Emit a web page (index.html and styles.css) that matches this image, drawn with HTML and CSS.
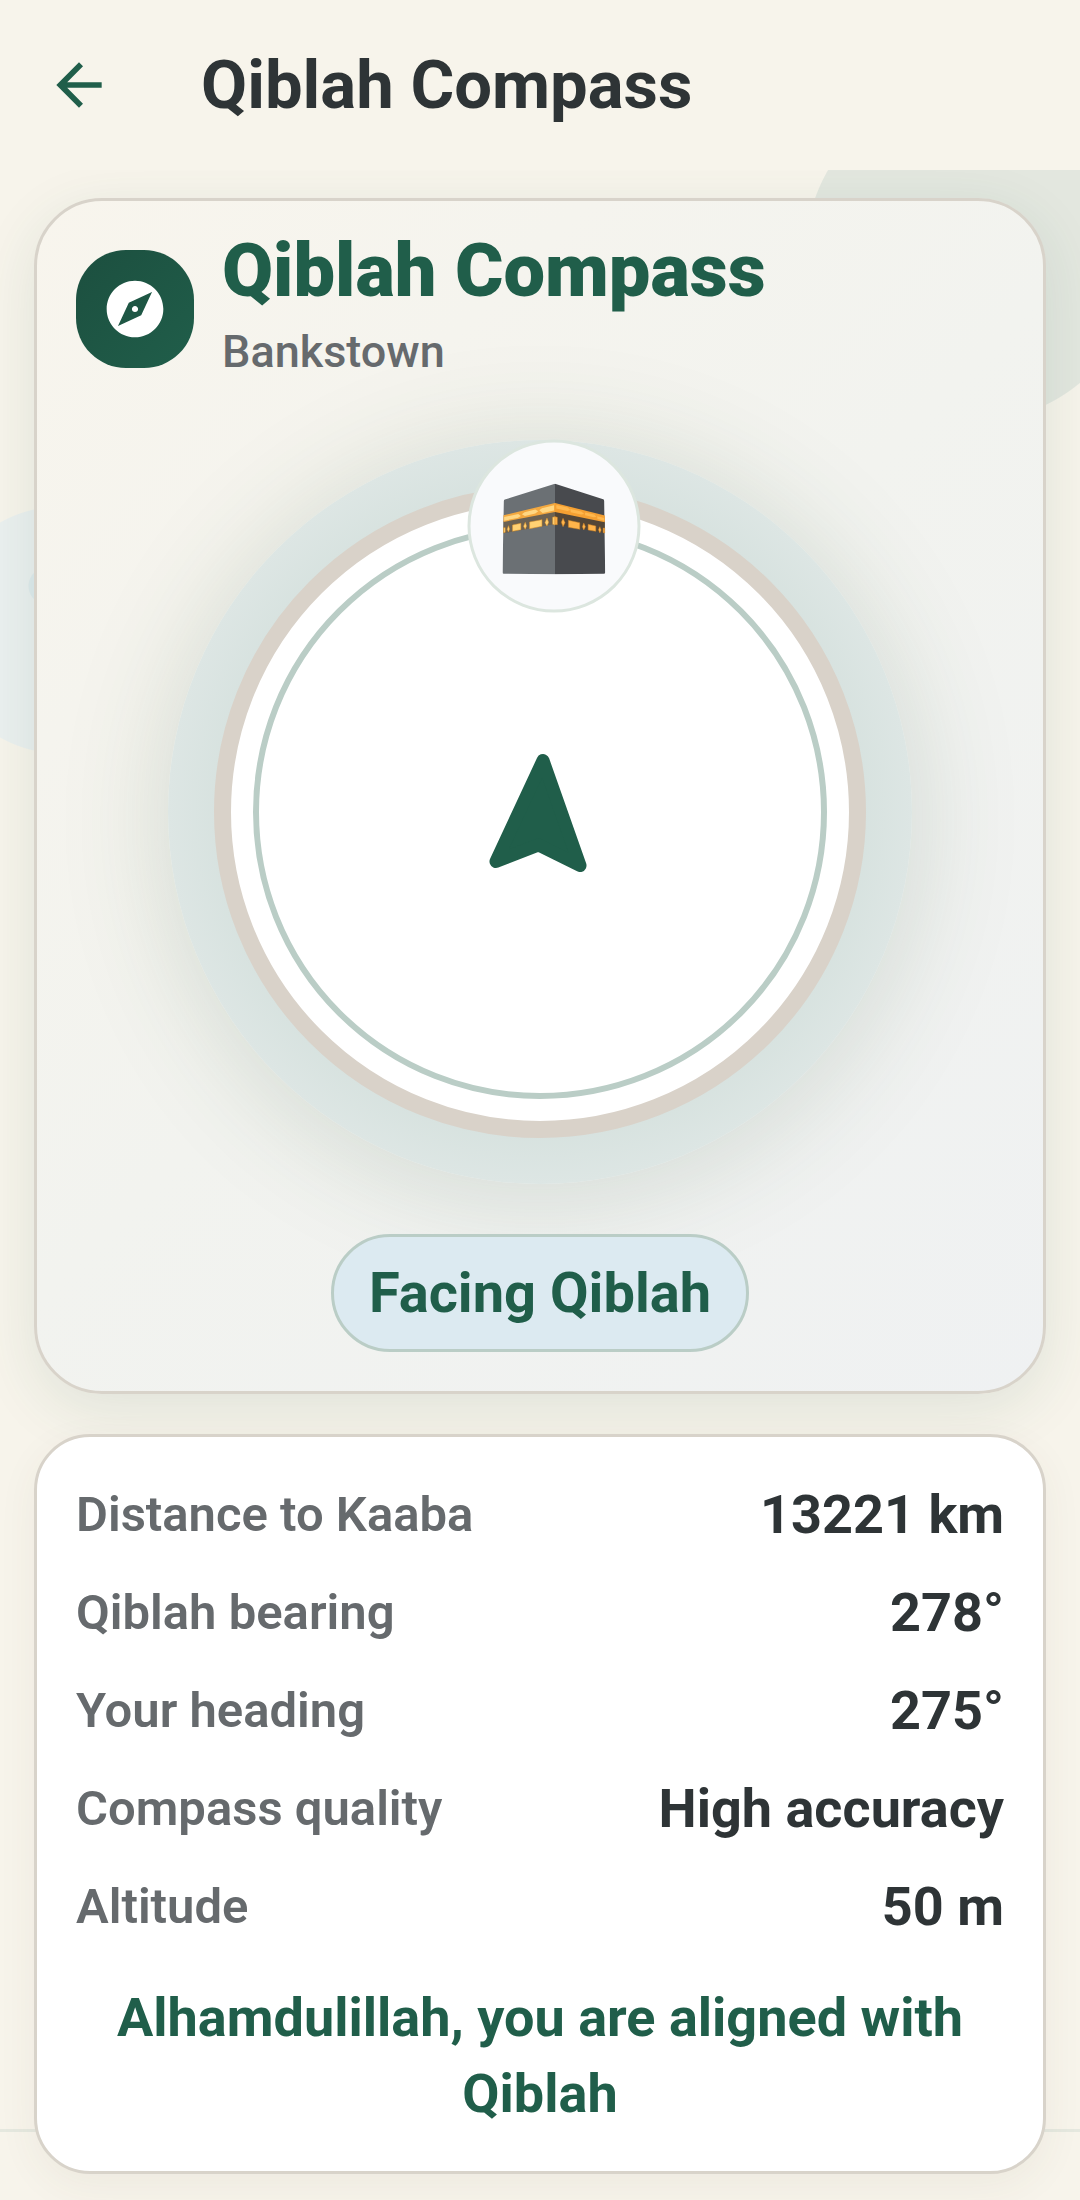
FILE: index.html
```html
<!DOCTYPE html>
<html lang="en">
<head>
  <meta charset="utf-8">
  <meta name="viewport" content="width=device-width, initial-scale=1">
  <title>Qiblah Compass</title>
  <link rel="stylesheet" href="styles.css">
</head>
<body>
  <header class="app-bar">
    <button class="back" type="button" aria-label="Back">
      <svg class="icon" viewBox="0 0 24 24" aria-hidden="true"><path fill="currentColor" d="M20 11H7.83l5.59-5.59L12 4l-8 8 8 8 1.41-1.41L7.83 13H20v-2z"/></svg>
    </button>
    <h1 class="app-title">Qiblah Compass</h1>
  </header>

  <main class="content">
    <section class="card compass-card">
      <div class="card-head">
        <span class="badge">
          <svg class="icon" viewBox="0 0 24 24" aria-hidden="true"><path fill="currentColor" d="M12 10.9c-.61 0-1.1.49-1.1 1.1s.49 1.1 1.1 1.1c.61 0 1.1-.49 1.1-1.1s-.49-1.1-1.1-1.1zM12 2C6.48 2 2 6.48 2 12s4.48 10 10 10 10-4.48 10-10S17.52 2 12 2zm2.19 12.19L6 18l3.81-8.19L18 6l-3.81 8.19z"/></svg>
        </span>
        <div class="card-text">
          <h2 class="card-title">Qiblah Compass</h2>
          <p class="place">Bankstown</p>
        </div>
      </div>

      <div class="halo">
        <div class="dial">
          <div class="ring">
            <svg class="needle" viewBox="0 0 120 120" role="img" aria-label="Your heading"><path d="M63 8.5 16 109.5 58.5 93 100 113.5z"/></svg>
          </div>
        </div>
        <div class="kaaba">
          <svg class="kaaba-icon" viewBox="188 192 308 272" role="img" aria-label="Kaaba">
            <path fill="#6b7074" d="M195 240 345 193v270l-153-1q-4 0-4-4l4-213q0-4 3-5z"/>
            <path fill="#484a4e" d="M345 193l144 46q3 1 3 5l3 214q0 4-4 4l-146 1z"/>
            <path fill="#6b6152" d="M191 304 345 269v44l-154 28z"/>
            <path fill="#534637" d="M345 269l149 35v36l-149-27z"/>
            <path fill="#f3a83f" d="M191 287 345 250v27l-154 30z"/>
            <path fill="#f5a032" d="M345 250l149 38v20l-149-31z"/>
            <g fill="#ffd783">
              <path d="M193 292l42-9 8 6-10 6-40 8zM246 284l8-6 32-8 9 5-9 7-31 7zM298 272l8-6 36-9v16l-34 7z"/>
            </g>
            <g fill="#ffb84e">
              <path d="M349 256l34 8 8 7-9 3-33-7zM391 268l33 8 8 7-9 2-31-7zM435 279l27 6 7 6-8 2-26-6zM471 290l21 5v8l-20-5z"/>
            </g>
            <g fill="#ffd173" stroke="#df9228" stroke-width="1.5">
              <path d="M191 324h5v14l-5 1zM218 316l25-5v19l-25 5zM269 307l37-7v20l-37 7zM338 293l7-2v25l-7-2z"/>
              <path d="M206 318l3 10-3 9-4-8zM256 308l4 11-4 10-5-9zM321 295l5 13-5 11-6-10z"/>
            </g>
            <g fill="#ffb44b" stroke="#c87e25" stroke-width="1.5">
              <path d="M345 291l7 2v22h-7zM385 302l34 7v20l-34-6zM444 314l23 5v16l-23-4zM489 325h5v15l-5-1z"/>
              <path d="M369 296l6 13-6 12-5-13zM431 310l5 11-5 10-4-10zM479 321l4 10-4 9-4-10z"/>
            </g>
          </svg>
        </div>
      </div>

      <p class="status">Facing Qiblah</p>
    </section>

    <section class="card details">
      <dl class="rows">
        <div class="row"><dt>Distance to Kaaba</dt><dd>13221 km</dd></div>
        <div class="row"><dt>Qiblah bearing</dt><dd>278°</dd></div>
        <div class="row"><dt>Your heading</dt><dd>275°</dd></div>
        <div class="row"><dt>Compass quality</dt><dd>High accuracy</dd></div>
        <div class="row"><dt>Altitude</dt><dd>50 m</dd></div>
      </dl>
      <p class="message">Alhamdulillah, you are aligned with Qiblah</p>
    </section>
  </main>
</body>
</html>
```
FILE: styles.css
```css
:root {
  --green: #205e4a;
  --ink: #2e3436;
  --muted: #666a6d;
  --line: #d8d3ca;
  --page: #f7f4eb;
}

* {
  box-sizing: border-box;
}

body,
h1,
h2,
p,
dl,
dd {
  margin: 0;
}

body {
  display: flex;
  flex-direction: column;
  min-height: 100vh;
  background: var(--page);
  color: var(--ink);
  font-family: Roboto, "Liberation Sans", sans-serif;
}

.icon {
  display: block;
  width: 68px;
  height: 68px;
}

/* App bar */
.app-bar {
  display: flex;
  align-items: center;
  gap: 88px;
  height: 170px;
  padding: 0 45px;
}

.back {
  padding: 0;
  border: 0;
  background: none;
  color: var(--green);
  cursor: pointer;
}

.app-title {
  font-size: 67px;
  font-weight: 700;
  line-height: 80px;
}

/* Scrolling content with tinted shapes behind the cards */
.content {
  position: relative;
  z-index: 0;
  flex: 1;
  display: flex;
  flex-direction: column;
  gap: 40px;
  padding: 28px 34px;
  overflow: hidden;
  background:
    radial-gradient(circle 19px at 47px 416px, #dfeaec 18px, transparent 19px),
    radial-gradient(circle 124px at 61px 460px, #ebf0ef 123px, transparent 124px),
    radial-gradient(circle 168px at calc(100% - 107px) 84px, #e3e7df 167px, transparent 168px);
}

.content::after {
  content: "";
  position: absolute;
  z-index: -1;
  right: 0;
  bottom: 70px;
  left: 0;
  height: 3px;
  background: #e5e8df;
}

.card {
  display: flex;
  flex-direction: column;
  border: 3px solid var(--line);
}

.compass-card {
  align-items: center;
  padding: 25px 39px 39px;
  border-radius: 68px;
  background: linear-gradient(135deg, #f8f5ed, #f2f3ef 50%, #eff1f2);
  box-shadow: 0 16px 60px rgba(32, 94, 74, 0.11);
}

.card-head {
  display: flex;
  align-items: center;
  align-self: stretch;
  gap: 28px;
}

.badge {
  display: grid;
  place-items: center;
  width: 118px;
  height: 118px;
  border-radius: 50px;
  background: linear-gradient(135deg, #1c4f3f, #205e4a);
  color: #fff;
}

.card-text {
  padding-bottom: 4px;
}

.card-title {
  color: var(--green);
  font-size: 74px;
  font-weight: 900;
  line-height: 90px;
}

.place {
  color: var(--muted);
  font-size: 45px;
  font-weight: 500;
  line-height: 72px;
}

/* Compass */
.halo {
  position: relative;
  width: min(744px, 100%);
  aspect-ratio: 1;
  margin: 48px 0 50px;
  padding: 46px;
  border-radius: 50%;
  background: radial-gradient(closest-side, #d7e2df 86%, #dde6e4 100%);
  box-shadow: 0 8px 110px rgba(50, 90, 60, 0.17);
}

.dial {
  height: 100%;
  padding: 22px;
  border: 17px solid #d9d2c9;
  border-radius: 50%;
  background: #fff;
}

.ring {
  display: grid;
  place-items: center;
  height: 100%;
  border: 6px solid #bacdc6;
  border-radius: 50%;
}

.needle {
  width: 120px;
  height: 120px;
  fill: var(--green);
  stroke: var(--green);
  stroke-width: 13;
  stroke-linejoin: round;
}

.kaaba {
  position: absolute;
  top: 11.5%;
  left: 51.9%;
  display: grid;
  place-items: center;
  width: 173px;
  height: 173px;
  border: 3px solid #dce6df;
  border-radius: 50%;
  background: #f9fafc;
  transform: translate(-50%, -50%);
}

.kaaba-icon {
  width: 103px;
  height: 91px;
  margin-top: 6px;
}

.status {
  position: relative;
  padding: 18px 35px;
  border: 3px solid #bacdc6;
  border-radius: 60px;
  background: #dceaf1;
  color: var(--green);
  font-size: 56px;
  font-weight: 700;
  line-height: 76px;
}

/* Details */
.details {
  gap: 34px;
  padding: 39px;
  border-radius: 56px;
  background: #fff;
  box-shadow: 0 12px 40px rgba(90, 75, 50, 0.06);
}

.rows {
  display: flex;
  flex-direction: column;
  gap: 20px;
}

.row {
  display: flex;
  justify-content: space-between;
  gap: 24px;
  line-height: 78px;
}

dt {
  color: var(--muted);
  font-size: 49px;
  font-weight: 600;
}

dd {
  font-size: 54px;
  font-weight: 700;
  text-align: right;
}

.message {
  color: var(--green);
  font-size: 54px;
  font-weight: 700;
  line-height: 76px;
  text-align: center;
}
```
